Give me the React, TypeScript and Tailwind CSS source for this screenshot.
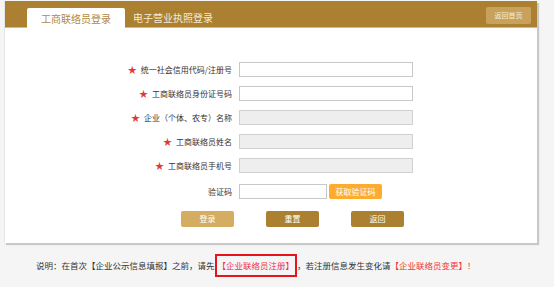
import React from "react";

const font = { fontFamily: '"Noto Sans CJK SC", "Noto Sans", sans-serif' };

function Row({
  label,
  required = true,
  disabled = false,
}: {
  label: string;
  required?: boolean;
  disabled?: boolean;
}) {
  return (
    <div className="flex items-center h-[15px]">
      <div className="w-[227px] flex justify-end items-center pr-[7px] text-[8px] leading-none text-[#333]">
        {required && <span className="text-[#e4393c] text-[9px] mr-[4px] leading-none">★</span>}
        <span>{label}</span>
      </div>
      <div
        className={`w-[174px] h-[15px] border ${
          disabled ? "bg-[#eeeeee] border-[#d0d0d0]" : "bg-white border-[#c8c8c8]"
        }`}
      />
    </div>
  );
}

export default function App() {
  return (
    <div className="w-[554px] h-[287px] bg-[#f5f5f5] overflow-hidden" style={font}>
      <div className="ml-[4px] pt-[1px] w-[533px]">
        <div className="bg-white shadow-[2px_2px_1px_rgba(0,0,0,0.18)] border-l border-[#e6e6e6]">
          <div className="h-[27px] bg-[#ab8030] flex items-end pl-[22px] pr-[6px] relative border-b border-[#d6b87a]">
            <div className="h-[20px] w-[98px] bg-white rounded-t-[2px] flex items-center justify-center text-[10px] text-[#b08a44] -mb-[1px]">
              工商联络员登录
            </div>
            <div className="h-[20px] ml-[8px] flex items-center text-[10px] text-[#f4ead6]">
              电子营业执照登录
            </div>
            <div className="absolute right-[6px] top-[6px] w-[45px] h-[17px] bg-[#c8a25c] rounded-[2px] flex items-center justify-center text-[7px] text-[#f6ecd8]">
              返回首页
            </div>
          </div>
          <div className="pt-[34px] pb-[16px] pl-[7px]">
            <div className="flex flex-col gap-[9px]">
              <Row label="统一社会信用代码/注册号" />
              <Row label="工商联络员身份证号码" />
              <Row label="企业（个体、农专）名称" disabled />
              <Row label="工商联络员姓名" disabled />
              <Row label="工商联络员手机号" disabled />
            </div>
            <div className="flex items-center h-[15px] mt-[11px]">
              <div className="w-[227px] flex justify-end pr-[7px] text-[8px] leading-none text-[#333]">
                验证码
              </div>
              <div className="w-[88px] h-[15px] border border-[#c8c8c8] bg-white" />
              <div className="ml-[2px] w-[53px] h-[15px] bg-[#fdac2f] rounded-[2px] flex items-center justify-center text-[8px] text-white">
                获取验证码
              </div>
            </div>
            <div className="flex mt-[12px] pl-[169px] gap-[32px]">
              <div className="w-[53px] h-[16px] bg-[#d4ad62] rounded-[2px] flex items-center justify-center text-[8px] text-white">
                登录
              </div>
              <div className="w-[53px] h-[16px] bg-[#ab8030] rounded-[2px] flex items-center justify-center text-[8px] text-white">
                重置
              </div>
              <div className="w-[53px] h-[16px] bg-[#ab8030] rounded-[2px] flex items-center justify-center text-[8px] text-white">
                返回
              </div>
            </div>
          </div>
        </div>
      </div>
      <div className="mt-[11px] pl-[36px] flex items-center text-[8.5px] text-[#333] leading-none">
        <span>说明：在首次【企业公示信息填报】之前，请先</span>
        <span className="border-2 border-[#e8141c] px-[1px] py-[5px] text-[#f0323a]">【企业联络员注册】</span>
        <span>，若注册信息发生变化请</span>
        <span className="text-[#f0323a]">【企业联络员变更】！</span>
      </div>
    </div>
  );
}
